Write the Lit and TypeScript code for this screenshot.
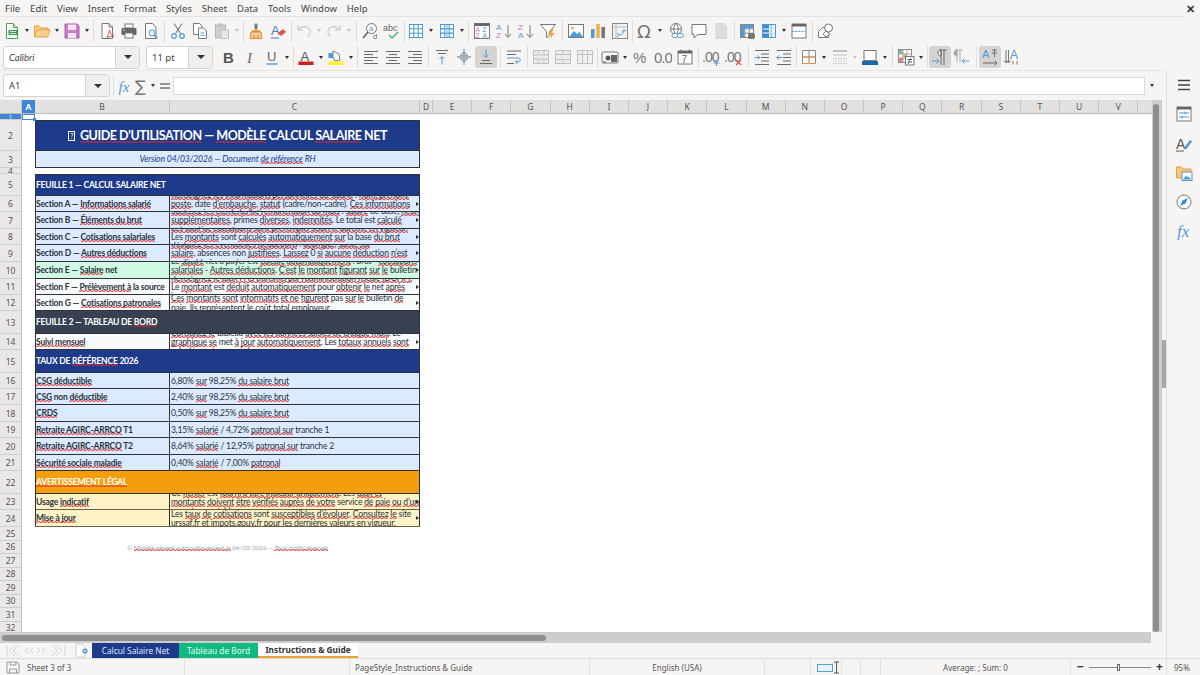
import { LitElement, html, css, svg } from 'lit';
import { customElement } from 'lit/decorators.js';

const G = '#6a6a6a';
const B = '#4f9ad8';
const L = '#c2c2c2';

const lines = (ys: number[], x1 = 3, x2 = 15, c = G) =>
  ys.map((y) => svg`<path d="M${x1} ${y}H${x2}" stroke="${c}" fill="none"/>`);

const gridIcon = (c: string) => svg`<rect x="2.5" y="2.5" width="13" height="13" fill="#fff" stroke="${c}"/><path d="M2.5 6.8h13M2.5 11.2h13M6.8 2.5v13M11.2 2.5v13" stroke="${c}" fill="none"/>`;

const icons: Record<string, unknown> = {
  newdoc: svg`<path d="M3.5 1.5h7l4 4v11h-11z" fill="#fff" stroke="#4aa35a"/><path d="M10.5 1.5v4h4" fill="#cfe9d2" stroke="#4aa35a"/><rect x="5.5" y="8" width="9" height="5" fill="#3c9a4e"/><path d="M7 9.5h6M7 11.5h6" stroke="#fff" stroke-width=".8"/>`,
  open: svg`<path d="M1.5 15V4h5l1.5 2h7v2" fill="#f9c77b" stroke="#e6a24a"/><path d="M1.5 15l2.5-7h13l-2.5 7z" fill="#fbd08d" stroke="#e6a24a"/>`,
  save: svg`<path d="M2 2h12l2 2v12H2z" fill="#c77fcb" stroke="#a95dae"/><rect x="5" y="2.5" width="8" height="5.5" fill="#f4e4f5"/><rect x="5" y="11" width="8" height="5" fill="#f4e4f5"/>`,
  pdf: svg`<path d="M4 1.5h7l3.5 3.5v11.5H4z" fill="#fff" stroke="#777"/><path d="M11 1.5v3.5h3.5" fill="none" stroke="#777"/><path d="M9 16c1-3 2-6 2.5-8 .5 3 2 5 4.5 6-3 0-5 .5-7 2z" fill="none" stroke="#d9534f"/>`,
  print: svg`<rect x="5" y="2" width="8" height="4" fill="#fff" stroke="#777"/><rect x="1.5" y="6" width="15" height="7" rx="1" fill="#666"/><rect x="5" y="11" width="8" height="5" fill="#fff" stroke="#777"/><path d="M3 8h2" stroke="#9fd0f0"/>`,
  preview: svg`<path d="M3.5 1.5h7l3.5 3.5v11.5H3.5z" fill="#fff" stroke="#777"/><circle cx="10" cy="11" r="3" fill="#e6f3fb" stroke="${B}"/><path d="M12 13l3.5 3.5" stroke="${B}" stroke-width="1.4"/>`,
  cut: svg`<path d="M5 1.5l6.5 10M13 1.5l-6.5 10" stroke="#666" fill="none"/><circle cx="5" cy="14" r="2.3" fill="none" stroke="${B}" stroke-width="1.2"/><circle cx="13" cy="14" r="2.3" fill="none" stroke="${B}" stroke-width="1.2"/>`,
  copy: svg`<path d="M2.500 1.500h6l2.500 2.500v8.500H2.500z" fill="#fff" stroke="#777"/><path d="M7.500 6h5l3 3v7.500h-8z" fill="#fff" stroke="#777"/><path d="M9.500 11h4M9.500 13.500h4" stroke="${B}"/>`,
  paste: svg`<rect x="2.5" y="3" width="10" height="13" fill="#cfcfcf" stroke="#b5b5b5"/><rect x="5" y="1.5" width="5" height="3" fill="#c2c2c2"/><rect x="8" y="8" width="7.5" height="8.5" fill="#e6e6e6" stroke="#c2c2c2"/>`,
  clone: svg`<rect x="7.5" y="1.5" width="3" height="6" rx="1" fill="#777"/><path d="M5 8h8v2H5z" fill="#e79a3f"/><path d="M4 10h10l1 6.500H3z" fill="#f6c98e" stroke="#e08c2b"/><path d="M7 13v3M11 13v3" stroke="#e08c2b"/>`,
  clear: svg`<text x="2" y="13" font-size="13" font-family="Liberation Sans" fill="#4a7db5">A</text><path d="M2 16h8" stroke="#4a7db5"/><path d="M9 11l5-4 3 3-5 4z" fill="#e2504f"/>`,
  undo: svg`<path d="M3 3v5h5M3.500 8C6 4 12 3.500 14.500 7.500c1.300 2.500.3 5-2 7" fill="none" stroke="#d0d0d0" stroke-width="1.3"/>`,
  redo: svg`<path d="M15 3v5h-5M14.500 8C12 4 6 3.500 3.500 7.500c-1.300 2.500-.3 5 2 7" fill="none" stroke="#d0d0d0" stroke-width="1.3"/>`,
  find: svg`<circle cx="10.500" cy="6.500" r="5" fill="#fff" stroke="#777"/><path d="M7 10l-5 6" stroke="#666" stroke-width="1.6"/><text x="8" y="9" font-size="7.5" font-family="Liberation Sans" fill="${B}">a</text><text x="12" y="17" font-size="7.5" font-family="Liberation Sans" fill="#666">d</text>`,
  spell: svg`<text x="0" y="9" font-size="9" font-family="Liberation Sans" fill="#666">abc</text><path d="M6 13l3 3 6-6" fill="none" stroke="#4fb286" stroke-width="1.5"/>`,
  table: gridIcon(B),
  cols: svg`${gridIcon(B)}<rect x="7" y="3" width="4" height="12" fill="#b8daf3"/><path d="M2.500 6.800h13M2.500 11.200h13" stroke="${B}"/>`,
  headers: svg`<rect x="1.5" y="1.5" width="15" height="15" fill="#fff" stroke="#777"/><rect x="1.5" y="1.5" width="15" height="2.5" fill="#666"/><text x="2.5" y="10" font-size="6.5" font-family="Liberation Sans" fill="#c678c8">A</text><text x="9.5" y="10" font-size="6.5" font-family="Liberation Sans" fill="${B}">Z</text><text x="2.5" y="16" font-size="6.5" font-family="Liberation Sans" fill="#c678c8">Z</text><text x="9.5" y="16" font-size="6.5" font-family="Liberation Sans" fill="${B}">A</text>`,
  asc: svg`<text x="1" y="8" font-size="8" font-family="Liberation Sans" fill="${B}">A</text><text x="1" y="16" font-size="8" font-family="Liberation Sans" fill="#c678c8">Z</text><path d="M13 3v12M10 12l3 3.500 3-3.500" fill="none" stroke="#777"/>`,
  desc: svg`<text x="1" y="8" font-size="8" font-family="Liberation Sans" fill="#c678c8">Z</text><text x="1" y="16" font-size="8" font-family="Liberation Sans" fill="${B}">A</text><path d="M13 3v12M10 12l3 3.500 3-3.500" fill="none" stroke="#777"/>`,
  filter: svg`<path d="M1.500 2.500h15l-6 7v4l-3 2v-6z" fill="#fff" stroke="#777"/><path d="M12 7l-3 6h3l-1.500 4.500 5-6.500h-3l2-4z" fill="#f0a03c"/>`,
  image: svg`<rect x="1.5" y="2.5" width="15" height="13" fill="#fff" stroke="#777"/><circle cx="5.5" cy="6" r="1.5" fill="#f2b04c"/><path d="M2 15l5-6 3 3 2.500-2 3.500 5z" fill="${B}"/>`,
  chart: svg`<rect x="2" y="7" width="3.6" height="9" fill="${B}"/><rect x="7.2" y="2" width="3.6" height="14" fill="#f0b04c"/><rect x="12.4" y="5" width="3.6" height="11" fill="#777"/>`,
  pivot: svg`<rect x="1.5" y="1.5" width="15" height="15" fill="#f3f3f3" stroke="#888"/><path d="M1.500 5h15M5 1.500v15" stroke="#bbb"/><path d="M8 13c3 0 5-2 5-5M11 9.500L13 7.500 15 9.500M6 11l2 2-2 2" fill="none" stroke="${B}"/>`,
  omega: svg`<text x="1" y="16" font-size="18" font-family="DejaVu Sans" fill="#777">Ω</text>`,
  link: svg`<circle cx="8" cy="7" r="5.5" fill="#fff" stroke="#777"/><path d="M2.500 7h11M8 1.500c-3 3-3 8 0 11M8 1.500c3 3 3 8 0 11" stroke="#777" fill="none"/><rect x="4" y="11.5" width="6" height="4" rx="2" fill="#fff" stroke="${B}"/><rect x="9.5" y="11.5" width="6" height="4" rx="2" fill="#fff" stroke="${B}"/>`,
  comment: svg`<path d="M2 2.500h14v10H7.500L4 16v-3.500H2z" fill="#fff" stroke="#777"/>`,
  hdr: svg`<path d="M4 1.500h7l3.500 3.500v11.500H4z" fill="#dcdcdc" stroke="#d4d4d4"/>`,
  freeze: svg`${gridIcon('#888')}<rect x="3" y="3" width="12" height="3" fill="${B}"/><rect x="3" y="3" width="3.500" height="12" fill="${B}"/><rect x="10" y="11" width="7" height="6" rx="2" fill="#777"/>`,
  freeze2: svg`${gridIcon(B)}<rect x="3" y="3" width="6" height="12" fill="#3a8ad0"/><path d="M3 7h12M3 11h12" stroke="#fff"/>`,
  split: svg`<rect x="2" y="2" width="14" height="14" fill="#fff" stroke="#777"/><rect x="2" y="2" width="14" height="2.5" fill="#666"/><path d="M2 9.500h14" stroke="${B}" stroke-dasharray="2 1.200"/>`,
  shapes: svg`<path d="M1.500 9.500l4-4h6v10h-10z" fill="#fff" stroke="#777"/><circle cx="11.500" cy="6" r="4" fill="#fff" stroke="#777"/><path d="M9 9l4 3-4 3-3-3z" fill="#fff" stroke="#777"/>`,
  bold: svg`<text x="4" y="14.5" font-size="15" font-weight="700" font-family="Liberation Sans" fill="#555">B</text>`,
  italic: svg`<text x="6" y="14.5" font-size="15" font-style="italic" font-family="Liberation Serif" fill="#666">I</text>`,
  under: svg`<text x="4" y="13" font-size="13" font-family="Liberation Sans" fill="#666">U</text><path d="M3.500 16h11" stroke="${B}" stroke-width="1.400"/>`,
  fcolor: svg`<text x="3.500" y="12.500" font-size="13" font-family="Liberation Sans" fill="#555">A</text><rect x="1.500" y="13.500" width="15" height="3.500" fill="#c9211e"/>`,
  bcolor: svg`<path d="M6 3l6 3 1 6-5 1-3-5z" fill="#fff" stroke="#777"/><rect x="1.500" y="5" width="5" height="5" fill="${B}"/><rect x="1.500" y="13.500" width="15" height="3.500" fill="#ffee33"/>`,
  left: lines([3.5, 6.5, 9.5, 12.5, 15.5], 2, 16).map((l, i) => (i % 2 ? svg`<path d="M2 ${3.5 + i * 3}H11" stroke="${G}"/>` : l)),
  center: [0, 1, 2, 3, 4].map((i) => (i % 2 ? svg`<path d="M5 ${3.5 + i * 3}H13" stroke="${G}"/>` : svg`<path d="M2 ${3.5 + i * 3}H16" stroke="${G}"/>`)),
  right: [0, 1, 2, 3, 4].map((i) => (i % 2 ? svg`<path d="M7 ${3.5 + i * 3}H16" stroke="${G}"/>` : svg`<path d="M2 ${3.5 + i * 3}H16" stroke="${G}"/>`)),
  vtop: svg`<path d="M3 2.500h12M5 5.500h8" stroke="${G}"/><path d="M9 16.500V8.500M6.500 11L9 8.500 11.500 11" fill="none" stroke="${B}"/>`,
  vmid: svg`<path d="M2 9h14M5 7h8M5 11h8" stroke="${G}"/><path d="M9 1v5M7 4l2 2 2-2M9 17v-5M7 14l2-2 2 2" fill="none" stroke="${B}"/>`,
  vbot: svg`<path d="M3 15.500h12M5 12.500h8" stroke="${G}"/><path d="M9 1.500v8M6.500 7L9 9.500 11.500 7" fill="none" stroke="${B}"/>`,
  wrap: svg`<path d="M2 3h14M2 6.500h9M2 15.500h7" stroke="${G}"/><path d="M2 10h11c3 0 3 4 0 4h-2M12.500 12L10.500 14l2 2" fill="none" stroke="${B}"/>`,
  merge: svg`<rect x="1.500" y="2.500" width="15" height="13" fill="#ececec" stroke="${L}"/><path d="M1.500 7h15M1.500 11h15M6 2.500v4.500M12 2.500v4.500M6 11v4.500M12 11v4.500" stroke="${L}"/>`,
  merge2: svg`<rect x="1.500" y="2.500" width="15" height="13" fill="#ececec" stroke="${L}"/><path d="M1.500 6.500h15M1.500 11.500h15M9 2.500v4M9 11.500v4" stroke="${L}"/>`,
  merge3: svg`<rect x="1.500" y="2.500" width="15" height="13" fill="#f0f0f0" stroke="${L}"/><path d="M1.500 6.500h15M6.500 2.500v13M11.500 2.500v13" stroke="${L}"/>`,
  currency: svg`<rect x="1" y="4" width="16" height="11" rx="1" fill="#fff" stroke="#777"/><circle cx="7" cy="10" r="2.500" fill="#555"/><rect x="10" y="7" width="6" height="7" fill="#666"/><path d="M2 14h3" stroke="#555"/>`,
  percent: svg`<text x="1" y="15" font-size="15" font-family="Liberation Sans" fill="#777">%</text>`,
  num: svg`<text x="0" y="15" font-size="15" font-family="Liberation Sans" fill="#777" letter-spacing="-1">0.0</text>`,
  date: svg`<rect x="2" y="3" width="14" height="13" fill="#fff" stroke="#777"/><rect x="2" y="3" width="14" height="2.500" fill="#666"/><path d="M5 1.500v3M13 1.500v3" stroke="#666"/><text x="5.500" y="15" font-size="10" font-family="Liberation Sans" fill="#666">7</text>`,
  addd: svg`<text x="-1" y="14" font-size="14" font-family="Liberation Sans" fill="#777" letter-spacing="-1">.00</text><path d="M13.500 12v6M10.500 15h6" stroke="${B}" stroke-width="1.200"/>`,
  deld: svg`<text x="-1" y="14" font-size="14" font-family="Liberation Sans" fill="#777" letter-spacing="-1">.00</text><path d="M11 12l5 5M16 12l-5 5" stroke="#d9534f" stroke-width="1.200"/>`,
  indent: svg`<path d="M2 2.500h14M8 6h8M8 9.500h8M8 13h8M2 16.500h14" stroke="${G}"/><path d="M1.500 9.500h5M4.500 7.300L6.800 9.500 4.500 11.700" fill="none" stroke="${B}"/>`,
  outdent: svg`<path d="M2 2.500h14M8 6h8M8 9.500h8M8 13h8M2 16.500h14" stroke="${G}"/><path d="M7 9.500H2M4 7.300L1.800 9.500 4 11.700" fill="none" stroke="${B}"/>`,
  border: svg`<path d="M2.500 2.500h13v13h-13zM9 2.500v13M2.500 9h13" fill="#fff" stroke="#888"/><path d="M2.500 15.500h13M2.500 9h13" stroke="#e6923a" fill="none"/>`,
  lstyle: svg`<path d="M2 3h14" stroke="${L}" stroke-width="2"/><path d="M2 7h14" stroke="${L}"/><path d="M2 10.500h14M2 13h14M2 15.500h14" stroke="${L}" stroke-dasharray="1.500 1"/>`,
  bdcolor: svg`<rect x="3" y="2.500" width="12" height="10" fill="#fff" stroke="#777"/><rect x="1" y="13" width="16" height="4" fill="#1c67b0"/>`,
  cond: svg`<rect x="1.500" y="1.500" width="13" height="13" fill="#fff" stroke="#888"/><rect x="2" y="2" width="4" height="4" fill="#7cc088"/><rect x="6" y="6" width="4" height="4" fill="#f0b06c"/><rect x="2" y="10" width="4" height="4" fill="#e07f7b"/><path d="M1.500 6h13M1.500 10h13M6 1.500v13M10 1.500v13" stroke="#aaa"/><rect x="8.500" y="8.500" width="8.500" height="8.500" fill="#fff" stroke="#777"/><path d="M10.500 11.500h4.500M10.500 14h4.500M14 10l-3 6" stroke="#666" fill="none"/>`,
  ltr: svg`<path d="M8 2h8M10 2c-4 0-4 6 0 6zM10 2v15M13 2v15" fill="#fff" stroke="${G}"/><path d="M1 13h7M5.500 10.500L8 13l-2.500 2.500" fill="none" stroke="${B}"/>`,
  rtl: svg`<path d="M2 2h8M4 2c-4 0-4 6 0 6zM4 2v12M7 2v12" fill="#aaa" stroke="#aaa"/><path d="M16 13H9M11.500 10.500L9 13l2.500 2.500" fill="none" stroke="${B}"/>`,
  ahoriz: svg`<text x="1" y="10" font-size="11" font-family="Liberation Sans" fill="${B}">A</text><path d="M11 2h5M13.500 1v8M11 5h5" stroke="#777" fill="none"/><path d="M2 15h14M13.500 12.500L16 15l-2.500 2.500" fill="none" stroke="#666"/>`,
  avert: svg`<text x="7" y="11" font-size="12" font-family="Liberation Sans" fill="${B}">A</text><path d="M3 2v13M5.500 2v13M1 12.500L3 15l2-2.500M3.500 12.500l2 2.500 2-2.500M10 13v3.500M14 13v3.500" fill="none" stroke="#777"/>`,
  fx: svg`<text x="2.500" y="14.500" font-size="15" font-style="italic" font-family="Liberation Serif" fill="${B}">fx</text>`,
  sigma: svg`<text x="3" y="15" font-size="16" font-family="DejaVu Sans" fill="#777">∑</text>`,
  equal: svg`<path d="M4 7h10M4 11h10" stroke="#777" stroke-width="1.600"/>`,
  menu: svg`<path d="M3 4.500h12M3 9h12M3 13.500h12" stroke="#444" stroke-width="1.400"/>`,
  props: svg`<rect x="2" y="2" width="14" height="14" fill="#fff" stroke="#777"/><rect x="2" y="2" width="14" height="2.500" fill="#666"/><path d="M4 8h10M4 12h10" stroke="${B}"/><path d="M10 6.500v3M7 10.500v3" stroke="${B}"/>`,
  styles: svg`<text x="1" y="14" font-size="14" font-family="Liberation Sans" fill="#555">A</text><path d="M1 16h8" stroke="#555"/><path d="M9 13l6-8 2 1.500-6 8z" fill="${B}"/>`,
  gallery: svg`<path d="M1.500 14V3h5l1.500 2h8v9z" fill="#f9c77b" stroke="#e6a24a"/><rect x="7" y="8" width="10" height="8.500" fill="#fff" stroke="#5a8fc0"/><path d="M8 15.500l3-4 2 2 1-1 2 3z" fill="${B}"/>`,
  nav: svg`<circle cx="9" cy="9" r="7" fill="#fff" stroke="#777"/><path d="M13 5L10.500 10.500 5 13l2.500-5.500z" fill="#3a8ad0"/>`,
  fxb: svg`<text x="2" y="15" font-size="17" font-style="italic" font-family="Liberation Serif" fill="${B}">fx</text>`,
};

const tb1 = 'newdoc d open d save d s5 pdf print preview s5 cut copy paste d:off s4 clone clear s4 undo d:off redo d:off s6 find spell s2 table d g1 cols d s5 headers asc desc filter s6 image chart pivot s3 omega d g2 link comment hdr s4 freeze freeze2 d split s5 shapes';
const tb2 = 'bold italic under d s4 fcolor d bcolor d s5 left center right s5 vtop vmid vbot:on s6 wrap s5 merge merge2 merge3 s3 currency d g1 percent num date s5 addd deld s6 indent outdent s3 border d g1 lstyle d:off bdcolor d s6 cond d s4 ltr:on rtl s6 ahoriz:on avert';

const menus = ['File', 'Edit', 'View', 'Insert', 'Format', 'Styles', 'Sheet', 'Data', 'Tools', 'Window', 'Help'];
const colLetters = 'EFGHIJKLMNOPQRSTUV'.split('');
const rowH = [6, 31, 17, 6, 22, 16, 17, 16, 17, 17, 16, 16, 23, 16, 23, 16, 16, 17, 16, 17, 16, 23, 16, 17, 13.5, 13.5, 13.5, 13.5, 13.5, 13.5, 13.5, 13.5];

// *mot* = souligne par le correcteur
const marked = (s: string) =>
  s.split('*').map((p, i) => (i % 2 ? html`<span class="sp">${p}</span>` : p));

const mainRows: [string, string, string[]][] = [
  ['Section A — *Informations salarié*', 'blue', ['*Renseignez les informations personnelles du salarié* : *nom, prénom,*', '*poste*, date *d\u2019embauche*, *statut* (cadre/non-cadre). *Ces informations*', 'sont reprises sur le bulletin.']],
  ['Section B — *Éléments du brut*', 'blue', ['*Saisissez les éléments de rémunération du mois* : *salaire* de base, *heures*', '*supplémentaires*, primes *diverses*, *indemnités*. Le total est *calculé*', 'automatiquement.']],
  ['Section C — *Cotisations salariales*', 'blue', ['*Les taux de cotisations sont préremplis selon le barème en vigueur.*', 'Les *montants* sont *calculés* *automatiquement* *sur* la base *du brut*', 'déclaré.']],
  ['Section D — *Autres déductions*', 'blue', ['*Indiquez les éventuelles déductions* : *acompte*, *saisie sur*', '*salaire*, absences non *justifiées*. *Laissez* 0 *si* *aucune* *déduction* *n\u2019est*', '*applicable* à ce mois.']],
  ['Section E — *Salaire* net', 'green', ['Le *salaire* net à payer est *calculé* *automatiquement* : brut - *cotisations*', '*salariales* - *Autres déductions*. *C\u2019est* *le* *montant* *figurant* *sur* *le* bulletin', 'de paie.']],
  ['Section F — *Prélèvement à* la source', 'white', ['*Renseignez le taux PAS transmis par l\u2019administration fiscale (DGFiP).*', 'Le *montant* est *déduit* *automatiquement* pour *obtenir* *le* net *après*', '*impôt*.']],
  ['Section G — *Cotisations patronales*', 'white', ['*Ces* *montants* *sont* *informatifs* *et ne* *figurent* pas *sur* *le* bulletin *de*', '*paie*. *Ils* *représentent* *le* *coût* total *employeur*.']],
];

const rates: [string, string][] = [
  ['*CSG déductible*', '6,80% *sur* 98,25% *du salaire brut*'],
  ['*CSG* non *déductible*', '2,40% *sur* 98,25% *du salaire brut*'],
  ['*CRDS*', '0,50% *sur* 98,25% *du salaire brut*'],
  ['*Retraite AGIRC-ARRCO* T1', '3,15% *salarié* / 4,72% *patronal sur* tranche 1'],
  ['*Retraite AGIRC-ARRCO* T2', '8,64% *salarié* / 12,95% *patronal sur* tranche 2'],
  ['*Sécurité sociale maladie*', '0,40% *salarié* / 7,00% *patronal*'],
];

@customElement('app-root')
export class AppRoot extends LitElement {
  static styles = css`
    :host {
      display: flex;
      flex-direction: column;
      width: 1200px;
      height: 675px;
      overflow: hidden;
      background: #f6f5f4;
      color: #444;
      font-family: 'Noto Sans', sans-serif;
      font-size: 9.5px;
    }

    .menubar {
      display: flex;
      align-items: center;
      height: 17px;
      box-sizing: border-box;
      padding-left: 5px;
      gap: 9.9px;
      border-bottom: 1px solid #e6e4e2;
      margin-right: 15px;
      position: relative;
      flex: none;
    }
    .close {
      position: absolute;
      right: -10px;
      top: 1px;
      font-size: 11px;
      font-weight: 700;
      color: #333;
    }

    .toolbar {
      display: flex;
      align-items: center;
      height: 27px;
      flex: none;
    }
    .pad1 { padding-left: 1px; }
    .pad3 { padding-left: 3px; height: 26px; }

    .ico {
      width: 22px;
      height: 22px;
      display: flex;
      align-items: center;
      justify-content: center;
      flex: none;
      border-radius: 3px;
    }
    .ico svg { width: 18px; height: 18px; display: block; flex: none; }
    .ico.on { background: #d6d4d2; }

    .dd {
      width: 8px;
      height: 22px;
      flex: none;
      display: flex;
      align-items: center;
      justify-content: center;
    }
    .dd::after {
      content: '';
      border-left: 2.5px solid transparent;
      border-right: 2.5px solid transparent;
      border-top: 3px solid #333;
    }
    .dd.off::after { border-top-color: #c4c4c4; }

    .sep {
      flex: none;
      height: 22px;
      display: flex;
      justify-content: center;
    }
    .sep::after {
      content: '';
      width: 1px;
      background: #e0dedb;
    }
    .gap { flex: none; }

    .combo {
      display: flex;
      flex: none;
      height: 23px;
      box-sizing: border-box;
      border: 1px solid #d6d4d1;
      border-radius: 3px;
      background: #fff;
      overflow: hidden;
    }
    .combo .val {
      flex: 1;
      display: flex;
      align-items: center;
      padding-left: 5px;
      font-size: 9.5px;
      color: #444;
    }
    .combo .btn {
      width: 23px;
      flex: none;
      background: #f1efed;
      border-left: 1px solid #d6d4d1;
      display: flex;
      align-items: center;
      justify-content: center;
    }
    .combo .btn::after {
      content: '';
      border-left: 4px solid transparent;
      border-right: 4px solid transparent;
      border-top: 4px solid #333;
    }
    .font { width: 137px; margin-right: 6px; }
    .font .val { font-style: italic; font-family: 'Lato', sans-serif; }
    .size { width: 67px; margin-right: 4px; }

    .work {
      flex: none;
      height: 588px;
      display: flex;
    }
    .leftcol {
      width: 1162px;
      flex: none;
      display: flex;
      flex-direction: column;
    }

    .formula {
      display: flex;
      align-items: center;
      height: 30px;
      flex: none;
      padding-left: 3px;
      border-top: 1px solid #e6e4e2;
      box-sizing: border-box;
    }
    .namebox { width: 107px; }
    .formula .sep { width: 7px; }
    .formula .ico { width: 16px; }
    .fxinput {
      width: 972px;
      height: 18px;
      flex: none;
      box-sizing: border-box;
      background: #fff;
      border: 1px solid #dcdad7;
    }
    .formula .fxdd { width: 14px; }

    .sheetwrap {
      flex: none;
      height: 532px;
      display: flex;
    }
    .sheet {
      width: 1152px;
      flex: none;
      display: flex;
      flex-direction: column;
      overflow: hidden;
    }
    .vscroll {
      width: 10px;
      flex: none;
      background: #cdcdcd;
      padding: 4px 3px 0 1px;
      box-sizing: border-box;
    }
    .vscroll div {
      height: 100%;
      background: #8e8e8e;
      border-radius: 3px;
    }

    .colhead {
      display: flex;
      height: 14px;
      flex: none;
      background: #e2e1e0;
      border-bottom: 1px solid #bdbcbb;
      box-sizing: border-box;
      color: #555;
      font-size: 8.5px;
    }
    .colhead div {
      flex: none;
      box-sizing: border-box;
      border-right: 1px solid #c6c5c4;
      text-align: center;
      line-height: 13px;
    }
    .colhead .sel {
      background: #3f86d6;
      color: #fff;
      font-weight: 700;
      border-right: none;
    }

    .sheetbody {
      flex: 1;
      display: flex;
      min-height: 0;
      background: #fff;
    }
    .rowhead {
      width: 22px;
      flex: none;
      background: #e9e8e7;
      color: #555;
      font-size: 8.5px;
    }
    .rowhead div {
      box-sizing: border-box;
      border-bottom: 1px solid #cfcecd;
      border-right: 1px solid #c6c5c4;
      display: flex;
      align-items: center;
      justify-content: center;
      overflow: hidden;
    }
    .rowhead .sel {
      background: #3f86d6;
      color: #fff;
      font-size: 5px;
    }

    .canvas {
      flex: 1;
      position: relative;
      min-width: 0;
    }
    .cursor {
      position: absolute;
      left: 0;
      top: 0;
      width: 13px;
      height: 6px;
      box-sizing: border-box;
      border: 1px solid #3f86d6;
    }
    .cursor::after {
      content: '';
      position: absolute;
      right: -2px;
      bottom: -2px;
      width: 3px;
      height: 3px;
      background: #3f86d6;
    }

    .table {
      display: grid;
      grid-template-columns: 135px 250px;
      margin-left: 13px;
      width: 385px;
      font-family: 'Lato', sans-serif;
      font-size: 8.6px;
      letter-spacing: -0.2px;
      color: #2b3340;
    }
    .blank { grid-column: span 2; }
    .c {
      box-sizing: border-box;
      overflow: hidden;
      position: relative;
      display: flex;
      flex-direction: column;
      justify-content: center;
      white-space: nowrap;
      border-bottom: 1px solid #2f3338;
      padding-left: 1px;
    }
    .c.b {
      border-left: 1px solid #2f3338;
      border-right: 1px solid #2f3338;
      font-weight: 700;
      font-size: 8.5px;
      padding-left: 0;
    }
    .c.d { border-right: 1px solid #2f3338; line-height: 9.3px; padding-top: 2px; }
    .c.d > div { flex: none; }
    .full {
      grid-column: span 2;
      border-left: 1px solid #2f3338;
      border-right: 1px solid #2f3338;
      padding-left: 0;
    }
    .banner { color: #fff; font-weight: 700; font-size: 8.6px; letter-spacing: -0.27px; }
    .top { border-top: 1px solid #2f3338; }
    .title {
      align-items: center;
      flex-direction: row;
      justify-content: center;
      gap: 5px;
      font-size: 12.5px;
      letter-spacing: -0.45px;
    }
    .tofu {
      width: 7px;
      height: 10px;
      box-sizing: border-box;
      border: 1px solid #fff;
      font-size: 7px;
      line-height: 8px;
      text-align: center;
      font-weight: 400;
    }
    .sub {
      background: #dbeafe;
      color: #1e3a8a;
      font-style: italic;
      align-items: center;
      font-size: 8.6px;
      letter-spacing: -0.12px;
    }
    .navy { background: #1e3a8a; }
    .slate { background: #374151; }
    .orange { background: #f59e0b; }
    .blue { background: #dbeafe; }
    .green { background: #d1fae5; }
    .white { background: #f9fafb; }
    .cream { background: #fef3c7; border-bottom-color: #6b6242 !important; }
    .clip::after {
      content: '';
      position: absolute;
      right: 0;
      top: 50%;
      margin-top: -2px;
      border-left: 3px solid #333;
      border-top: 2px solid transparent;
      border-bottom: 2px solid transparent;
    }
    .foot {
      grid-column: span 2;
      text-align: center;
      color: #a3a8b0;
      font-size: 6.4px;
      letter-spacing: -0.1px;
      line-height: 13px;
    }
    .sp {
      background: url("data:image/svg+xml,%3Csvg xmlns='http://www.w3.org/2000/svg' width='4' height='2'%3E%3Cpath d='M-1 .5L1 1.500 3 .5 5 1.500' fill='none' stroke='%23e8262c' stroke-width='1'/%3E%3C/svg%3E") repeat-x 0 100%;
    }

    .hscroll {
      height: 11px;
      flex: none;
      display: flex;
      align-items: center;
    }
    .htrack {
      width: 1151px;
      height: 100%;
      flex: none;
      background: #cdcdcd;
      display: flex;
      align-items: center;
      padding-left: 2px;
      box-sizing: border-box;
    }
    .hthumb {
      width: 544px;
      height: 6px;
      border-radius: 3px;
      background: #8e8e8e;
    }

    .tabs {
      flex: none;
      height: 15px;
      display: flex;
      align-items: stretch;
    }
    .tabnav {
      width: 75px;
      flex: none;
      display: flex;
      align-items: center;
      padding-left: 6px;
      box-sizing: border-box;
    }
    .addtab {
      width: 17px;
      flex: none;
      display: flex;
      align-items: center;
    }
    .addtab svg { width: 14px; height: 15px; }
    .tab {
      display: flex;
      align-items: center;
      justify-content: center;
      flex: none;
      font-size: 8.3px;
      box-sizing: border-box;
    }
    .t1 { width: 87px; background: #1e3a8a; color: #dbe6fb; }
    .t2 { width: 79px; background: #10b981; color: #e0fbf0; }
    .t3 {
      width: 100px;
      background: #fff;
      color: #333;
      font-weight: 700;
      border-bottom: 2px solid #e8a33a;
    }

    .splitter {
      width: 4px;
      flex: none;
      display: flex;
      align-items: center;
    }
    .splitter div {
      width: 4px;
      height: 48px;
      background: #a6a6a6;
    }

    .sidebar {
      width: 34px;
      flex: none;
      box-sizing: border-box;
      border-left: 1px solid #e2e0dd;
      display: flex;
      flex-direction: column;
      align-items: center;
      gap: 7.3px;
      padding-top: 4px;
    }

    .status {
      height: 17px;
      flex: none;
      box-sizing: border-box;
      border-top: 1px solid #dddbd8;
      display: flex;
      align-items: center;
      font-size: 8px;
      color: #555;
    }
    .status > div {
      flex: none;
      height: 100%;
      box-sizing: border-box;
      border-right: 1px solid #e4e2df;
      display: flex;
      align-items: center;
    }
    .status svg { display: block; flex: none; }
    .st-a { width: 185px; padding-left: 6px; gap: 7px; }
    .st-b { width: 165px; }
    .st-c { width: 240px; padding-left: 5px; }
    .st-d { width: 175px; justify-content: center; }
    .st-e { width: 46px; }
    .st-f { width: 31px; padding-left: 6px; }
    .st-g { width: 19px; }
    .st-h { width: 20px; }
    .st-i { width: 190px; justify-content: center; }
    .st-j { width: 96px; padding-left: 6px; gap: 3px; }
    .status > .st-k { border-right: none; padding-left: 7px; }
    .slider {
      width: 62px;
      height: 1px;
      background: #888;
      position: relative;
      margin: 0 2px;
    }
    .slider::after {
      content: '';
      position: absolute;
      left: 28px;
      top: -3px;
      width: 3px;
      height: 7px;
      background: #f6f5f4;
      border: 1px solid #666;
      box-sizing: border-box;
    }
    .zbtn { font-size: 12px; color: #333; font-weight: 700; line-height: 12px; }
  `;

  toolbar(spec: string) {
    return spec.split(' ').map((t) => {
      if (t === 'd') return html`<div class="dd"></div>`;
      if (t === 'd:off') return html`<div class="dd off"></div>`;
      if (/^s\d$/.test(t)) return html`<div class="sep" style="width:${t[1]}px"></div>`;
      if (/^g\d$/.test(t)) return html`<div class="gap" style="width:${t[1]}px"></div>`;
      const [name, st] = t.split(':');
      return this.icon(name, st === 'on');
    });
  }

  icon(name: string, on = false) {
    return html`<div class="ico ${on ? 'on' : ''}"><svg viewBox="0 0 18 18">${icons[name]}</svg></div>`;
  }

  renderTable() {
    const total = rowH.slice(0, 26).map((h) => h + 'px').join(' ');
    return html`
      <div class="table" style="grid-template-rows:${total}">
        <div class="blank"></div>
        <div class="c full banner navy title top">
          <span class="tofu">?</span><span><span class="sp">GUIDE D\u2019UTILISATION</span> — <span class="sp">MODÈLE</span> CALCUL <span class="sp">SALAIRE</span> NET</span>
        </div>
        <div class="c full sub">
          <span>Version 04/03/2026 — Document <span class="sp">de référence</span> RH</span>
        </div>
        <div class="blank"></div>
        <div class="c full banner navy top"><span>FEUILLE 1 — CALCUL SALAIRE NET</span></div>
        ${mainRows.map(
          ([a, bg, text]) => html`
            <div class="c b ${bg}"><span>${marked(a)}</span></div>
            <div class="c d ${bg} clip">${text.map((l) => html`<div>${marked(l)}</div>`)}</div>
          `,
        )}
        <div class="c full banner slate"><span>FEUILLE 2 — TABLEAU DE <span class="sp">BORD</span></span></div>
        <div class="c b white"><span>${marked('*Suivi mensuel*')}</span></div>
        <div class="c d white clip">
          <div>${marked('*Consultez le* tableau *avec les données saisies de chaque mois*. Le')}</div>
          <div>${marked('*graphique* *se* met *à* *jour* *automatiquement*. Les *totaux* *annuels* *sont*')}</div>
          <div>${marked('calculés en temps réel.')}</div>
        </div>
        <div class="c full banner navy"><span>TAUX DE <span class="sp">RÉFÉRENCE</span> 2026</span></div>
        ${rates.map(
          ([a, b]) => html`
            <div class="c b blue"><span>${marked(a)}</span></div>
            <div class="c d blue"><span>${marked(b)}</span></div>
          `,
        )}
        <div class="c full banner orange"><span><span class="sp">AVERTISSEMENT LÉGAL</span></span></div>
        <div class="c b cream"><span>Usage ${marked('*indicatif*')}</span></div>
        <div class="c d cream clip">
          <div>${marked('Ce *fichier* est *fourni à titre indicatif uniquement*. Les *taux et*')}</div>
          <div>${marked('*montants* *doivent* *être* *vérifiés* *auprès* *de* *votre* service *de* *paie* *ou* *d\u2019un*')}</div>
          <div>${marked('*expert-comptable*.')}</div>
        </div>
        <div class="c b cream"><span>${marked('*Mise à jour*')}</span></div>
        <div class="c d cream clip">
          <div>${marked('Les *taux* *de* *cotisations* sont *susceptibles* *d\u2019évoluer*. *Consultez* *le* site')}</div>
          <div>${marked('*urssaf.fr* et *impots.gouv.fr* pour les *dernières* *valeurs* *en* *vigueur*.')}</div>
        </div>
        <div class="blank"></div>
        <div class="foot">
          © ${marked('*Modèle généré automatiquement le*')} 04/03/2026 — ${marked('*Tous droits réservés*')}
        </div>
      </div>
    `;
  }

  render() {
    return html`
      <div class="menubar">
        ${menus.map((m) => html`<span>${m}</span>`)}
        <span class="close">✕</span>
      </div>
      <div class="toolbar pad1">${this.toolbar(tb1)}</div>
      <div class="toolbar pad3">
        <div class="combo font"><div class="val">Calibri</div><div class="btn"></div></div>
        <div class="combo size"><div class="val">11 pt</div><div class="btn"></div></div>
        ${this.toolbar(tb2)}
      </div>
      <div class="work">
        <div class="leftcol">
          <div class="formula">
            <div class="combo namebox"><div class="val">A1</div><div class="btn"></div></div>
            <div class="sep"></div>
            ${this.icon('fx')} ${this.icon('sigma')}
            <div class="dd"></div>
            ${this.icon('equal')}
            <div class="fxinput"></div>
            <div class="dd fxdd"></div>
          </div>
          <div class="sheetwrap">
            <div class="sheet">
              <div class="colhead">
                <div style="width:22px"></div>
                <div class="sel" style="width:13px">A</div>
                <div style="width:135px">B</div>
                <div style="width:250px">C</div>
                <div style="width:13px">D</div>
                ${colLetters.map((c) => html`<div style="width:39.2px">${c}</div>`)}
                <div style="width:40px"></div>
              </div>
              <div class="sheetbody">
                <div class="rowhead">
                  ${rowH.map(
                    (h, i) => html`<div class="${i === 0 ? 'sel' : ''}" style="height:${h}px">${i + 1}</div>`,
                  )}
                </div>
                <div class="canvas">
                  ${this.renderTable()}
                  <div class="cursor"></div>
                </div>
              </div>
            </div>
            <div class="vscroll"><div></div></div>
          </div>
          <div class="hscroll"><div class="htrack"><div class="hthumb"></div></div></div>
          <div class="tabs">
            <div class="tabnav">
              <svg width="60" height="13" viewBox="0 0 60 13" fill="none" stroke="#d4d4d4">
                <path d="M1 1v11M9 1L3 6.500 9 12M13 1L7 6.500 13 12M22 4l-3 2.500 3 2.500M27 4l-3 2.500 3 2.500M31 4l3 2.500-3 2.500M36 4l3 2.500-3 2.500M46 1l6 5.500-6 5.500M50 1l6 5.500-6 5.500M59 1v11" />
              </svg>
            </div>
            <div class="addtab">
              <svg viewBox="0 0 14 15">
                <path d="M1 1h6l3 3v10H1z" fill="#fff" stroke="#ccc" />
                <circle cx="10" cy="8" r="2.5" fill="#3f86d6" />
                <path d="M8.500 8h3M10 6.500v3" stroke="#fff" stroke-width=".8" />
              </svg>
            </div>
            <div class="tab t1">Calcul Salaire Net</div>
            <div class="tab t2">Tableau de Bord</div>
            <div class="tab t3">Instructions &amp; Guide</div>
          </div>
        </div>
        <div class="splitter"><div></div></div>
        <div class="sidebar">
          ${this.icon('menu')} ${this.icon('props')} ${this.icon('styles')} ${this.icon('gallery')} ${this.icon('nav')}
          ${this.icon('fxb')}
        </div>
      </div>
      <div class="status">
        <div class="st-a">
          <svg width="14" height="13" viewBox="0 0 14 13">
            <path d="M1 1h10l2 2v9H1z" fill="none" stroke="#999" />
            <path d="M4 1v3h6V1M3.500 12V8h7v4" fill="none" stroke="#999" />
          </svg>
          Sheet 3 of 3
        </div>
        <div class="st-b"></div>
        <div class="st-c">PageStyle_Instructions &amp; Guide</div>
        <div class="st-d">English (USA)</div>
        <div class="st-e"></div>
        <div class="st-f">
          <svg width="16" height="9" viewBox="0 0 16 9"><rect x=".5" y="1.500" width="15" height="7" fill="#e8f2fa" stroke="#5a9fd0" /></svg>
          <svg width="7" height="13" viewBox="0 0 7 13"><path d="M1 1h5M3.500 1v11M1 12h5" stroke="#555" fill="none" /></svg>
        </div>
        <div class="st-g"></div>
        <div class="st-h"></div>
        <div class="st-i">Average: ; Sum: 0</div>
        <div class="st-j"><span class="zbtn">−</span><div class="slider"></div><span class="zbtn">+</span></div>
        <div class="st-k">95%</div>
      </div>
    `;
  }
}
